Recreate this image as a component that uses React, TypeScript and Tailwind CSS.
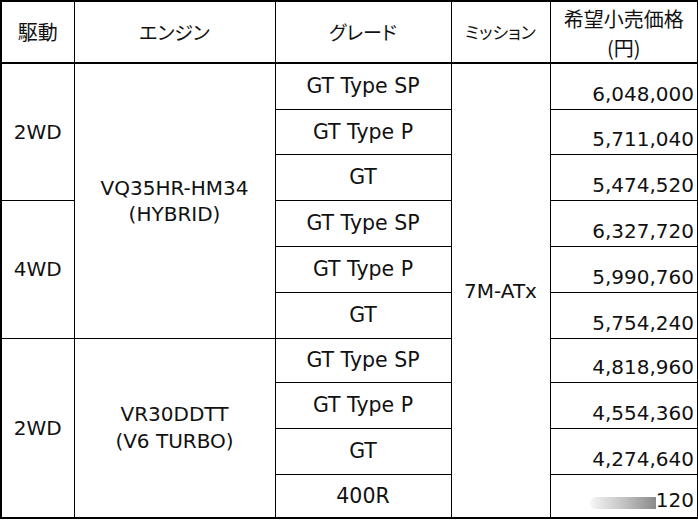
import React from 'react'

type Row = { grade: string; price: string; h: string }

const ROWS: Row[] = [
  { grade: 'GT Type SP', price: '6,048,000', h: 'h-[46px]' },
  { grade: 'GT Type P', price: '5,711,040', h: 'h-[45px]' },
  { grade: 'GT', price: '5,474,520', h: 'h-[46px]' },
  { grade: 'GT Type SP', price: '6,327,720', h: 'h-[46px]' },
  { grade: 'GT Type P', price: '5,990,760', h: 'h-[46px]' },
  { grade: 'GT', price: '5,754,240', h: 'h-[46px]' },
  { grade: 'GT Type SP', price: '4,818,960', h: 'h-[44px]' },
  { grade: 'GT Type P', price: '4,554,360', h: 'h-[46px]' },
  { grade: 'GT', price: '4,274,640', h: 'h-[46px]' },
  { grade: '400R', price: '120', h: 'h-[44px]' },
]

const cell = 'border border-black text-center align-middle p-0'
const jp = "font-['MS_UI_Gothic','Noto_Sans_CJK_JP',sans-serif] [font-feature-settings:'palt']"

export default function App() {
  return (
    <div className="w-[698px] h-[520px] bg-white text-[#111] font-['DejaVu_Sans','Noto_Sans_CJK_JP',sans-serif] text-[20px] leading-[26px]">
      <table className="w-[697px] border-collapse border-2 border-black table-fixed">
        <colgroup>
          <col className="w-[73px]" />
          <col className="w-[201px]" />
          <col className="w-[176px]" />
          <col className="w-[99px]" />
          <col className="w-[148px]" />
        </colgroup>
        <thead>
          <tr className="h-[61px] border-b-2 border-black">
            <th className={`${cell} ${jp} font-normal`}>駆動</th>
            <th className={`${cell} ${jp} font-normal text-[19px]`}>エンジン</th>
            <th className={`${cell} ${jp} font-normal text-[19px]`}>グレード</th>
            <th className={`${cell} ${jp} font-normal text-[17px]`}>ミッション</th>
            <th className={`${cell} ${jp} font-normal leading-[29px] pt-0.5`}>
              希望小売価格
              <br />
              (円)
            </th>
          </tr>
        </thead>
        <tbody>
          {ROWS.map((r, i) => (
            <tr key={i} className={r.h}>
              {i === 0 && <td rowSpan={3} className={cell}>2WD</td>}
              {i === 3 && <td rowSpan={3} className={cell}>4WD</td>}
              {i === 6 && <td rowSpan={4} className={cell}>2WD</td>}
              {i === 0 && (
                <td rowSpan={6} className={cell}>
                  VQ35HR-HM34
                  <br />
                  (HYBRID)
                </td>
              )}
              {i === 6 && (
                <td rowSpan={4} className={`${cell} leading-[27px]`}>
                  VR30DDTT
                  <br />
                  (V6 TURBO)
                </td>
              )}
              <td className={`${cell} text-[20.5px]`}>{r.grade}</td>
              {i === 0 && <td rowSpan={10} className={cell}>7M-ATx</td>}
              <td className="border border-black text-right align-bottom pr-[3px] pb-[2px]">
                {i === 9 ? (
                  <span className="inline-flex items-end">
                    <span className="w-[66px] h-[12px] mb-[4px] bg-gradient-to-r from-[#f6f6f6] via-[#c4c4c4] to-[#8a8a8a] rounded-l-full" />
                    <span>{r.price}</span>
                  </span>
                ) : (
                  r.price
                )}
              </td>
            </tr>
          ))}
        </tbody>
      </table>
    </div>
  )
}
